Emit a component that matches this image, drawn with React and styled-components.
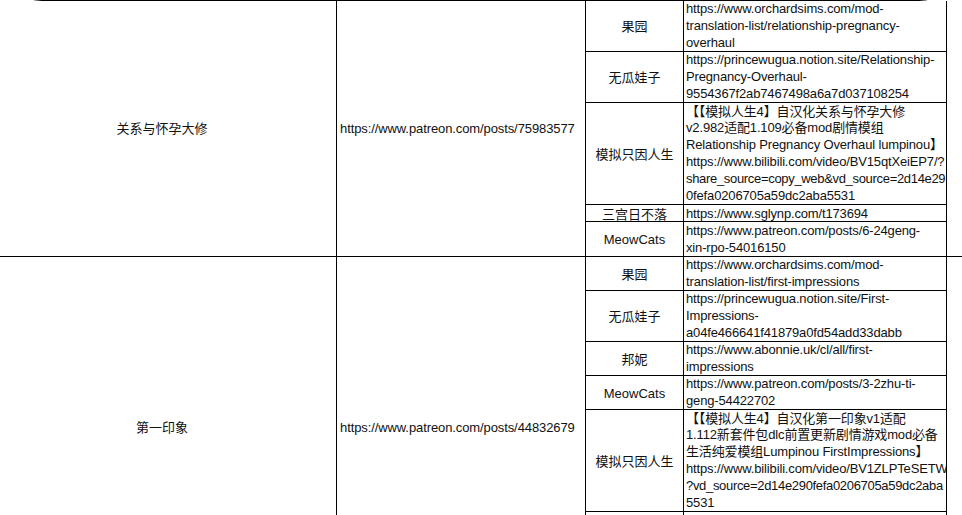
import styled, { createGlobalStyle } from "styled-components";

const GlobalStyle = createGlobalStyle`
  html, body {
    margin: 0;
    padding: 0;
    background: #fff;
    overflow: hidden;
  }
  body {
    font-family: "Liberation Sans", "Noto Sans CJK SC", sans-serif;
    font-size: 13px;
    color: #111;
  }
`;

const Sheet = styled.div`
  width: 962px;
  height: 515px;
  overflow: hidden;
`;

const TopRule = styled.div`
  margin-left: 34px;
  width: 893px;
  height: 1px;
  background: linear-gradient(to right, #bbb 0, #000 8px, #000 calc(100% - 8px), #bbb 100%);
`;

const Group = styled.div`
  display: grid;
  grid-template-columns: 337px 249px 361px 15px;
  border-bottom: 1px solid #000;
`;

const TitleCell = styled.div`
  display: flex;
  align-items: center;
  justify-content: center;
  padding-right: 12px;
  border-right: 1px solid #000;
  line-height: 17px;
`;

const LinkCell = styled.div`
  display: flex;
  align-items: center;
  padding-left: 3px;
  border-right: 1px solid #000;
  line-height: 17px;
  letter-spacing: -0.1px;
`;

const SubTable = styled.div`
  display: flex;
  flex-direction: column;
`;

const SubRow = styled.div`
  box-sizing: border-box;
  display: grid;
  grid-template-columns: 98px 263px;
  height: ${(p) => p.lines * 17}px;
  border-bottom: ${(p) => (p.last ? "none" : "1px solid #000")};
`;

const Source = styled.div`
  display: flex;
  align-items: center;
  justify-content: center;
  padding-top: 1px;
  border-right: 1px solid #000;
  white-space: nowrap;
  line-height: 17px;
`;

const Url = styled.div`
  display: flex;
  flex-direction: column;
  justify-content: center;
  padding: 1px 0 0 2px;
  border-right: 1px solid #000;
  overflow: hidden;
  line-height: 16.8px;
  letter-spacing: -0.15px;
`;

const UrlLine = styled.span`
  display: block;
  white-space: nowrap;
  letter-spacing: ${(p) => (p.tight ? "-0.32px" : "inherit")};
`;

const Margin = styled.div``;

const groups = [
  {
    title: "关系与怀孕大修",
    link: "https://www.patreon.com/posts/75983577",
    rows: [
      {
        source: "果园",
        lines: [
          "https://www.orchardsims.com/mod-",
          "translation-list/relationship-pregnancy-",
          "overhaul",
        ],
      },
      {
        source: "无瓜娃子",
        lines: [
          "https://princewugua.notion.site/Relationship-",
          "Pregnancy-Overhaul-",
          "9554367f2ab7467498a6a7d037108254",
        ],
      },
      {
        source: "模拟只因人生",
        lines: [
          "【【模拟人生4】自汉化关系与怀孕大修",
          "v2.982适配1.109必备mod剧情模组",
          "Relationship Pregnancy Overhaul lumpinou】",
          "https://www.bilibili.com/video/BV15qtXeiEP7/?",
          "share_source=copy_web&vd_source=2d14e29",
          "0fefa0206705a59dc2aba5531",
        ],
      },
      { source: "三宫日不落", lines: ["https://www.sglynp.com/t173694"] },
      {
        source: "MeowCats",
        lines: ["https://www.patreon.com/posts/6-24geng-", "xin-rpo-54016150"],
      },
    ],
  },
  {
    title: "第一印象",
    link: "https://www.patreon.com/posts/44832679",
    rows: [
      {
        source: "果园",
        lines: [
          "https://www.orchardsims.com/mod-",
          "translation-list/first-impressions",
        ],
      },
      {
        source: "无瓜娃子",
        lines: [
          "https://princewugua.notion.site/First-",
          "Impressions-",
          "a04fe466641f41879a0fd54add33dabb",
        ],
      },
      {
        source: "邦妮",
        lines: ["https://www.abonnie.uk/cl/all/first-", "impressions"],
      },
      {
        source: "MeowCats",
        lines: ["https://www.patreon.com/posts/3-2zhu-ti-", "geng-54422702"],
      },
      {
        source: "模拟只因人生",
        lines: [
          "【【模拟人生4】自汉化第一印象v1适配",
          "1.112新套件包dlc前置更新剧情游戏mod必备",
          "生活纯爱模组Lumpinou FirstImpressions】",
          "https://www.bilibili.com/video/BV1ZLPTeSETW",
          "?vd_source=2d14e290fefa0206705a59dc2aba",
          "5531",
        ],
      },
      { source: "", lines: ["", "", "", "", ""] },
    ],
  },
];

const isLong = (s) => s.length >= 39 && /[=_]/.test(s);

export default function App() {
  return (
    <Sheet>
      <GlobalStyle />
      <TopRule />
      {groups.map((g) => (
        <Group key={g.title}>
          <TitleCell>{g.title}</TitleCell>
          <LinkCell>{g.link}</LinkCell>
          <SubTable>
            {g.rows.map((r, i) => (
              <SubRow
                key={i}
                lines={r.lines.length}
                last={i === g.rows.length - 1}
              >
                <Source>{r.source}</Source>
                <Url>
                  {r.lines.map((l, j) => (
                    <UrlLine key={j} tight={isLong(l)}>
                      {l || "\u00a0"}
                    </UrlLine>
                  ))}
                </Url>
              </SubRow>
            ))}
          </SubTable>
          <Margin />
        </Group>
      ))}
    </Sheet>
  );
}
